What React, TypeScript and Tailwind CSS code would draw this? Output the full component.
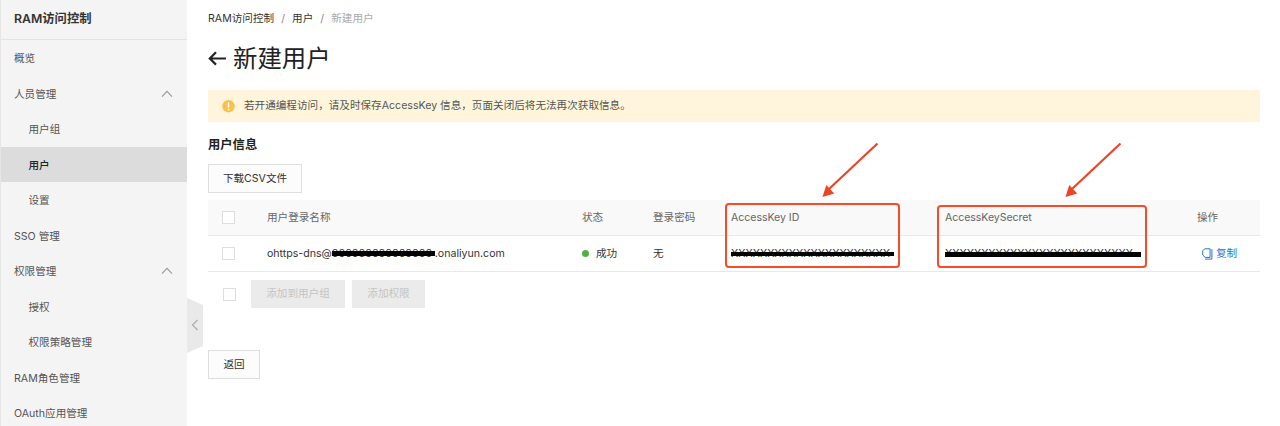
import React from 'react';

type NavItem = { label: string; sub?: boolean; open?: boolean; active?: boolean };

const nav: NavItem[] = [
  { label: '概览' },
  { label: '人员管理', open: true },
  { label: '用户组', sub: true },
  { label: '用户', sub: true, active: true },
  { label: '设置', sub: true },
  { label: 'SSO 管理' },
  { label: '权限管理', open: true },
  { label: '授权', sub: true },
  { label: '权限策略管理', sub: true },
  { label: 'RAM角色管理' },
  { label: 'OAuth应用管理' },
];

function Chevron() {
  return (
    <svg className="-mt-[2px] h-[8px] w-[12px]" viewBox="0 0 12 8" fill="none" stroke="#999" strokeWidth="1.1">
      <path d="M1 6.6 6 1.4l5 5.2" />
    </svg>
  );
}

function Sidebar() {
  return (
    <aside className="h-full w-[187px] shrink-0 overflow-hidden border-l border-[#e6e6e6] bg-[#f4f4f4]">
      <div className="flex h-[40px] items-center border-b border-[#e4e4e4] pl-[13px] pb-[1px] text-[12.3px] font-semibold text-[#333]">
        RAM访问控制
      </div>
      {nav.map((n) => (
        <div
          key={n.label}
          className={`flex h-[35.5px] items-center justify-between pt-[3px] pr-[14px] ${n.sub ? 'pl-[27.5px]' : 'pl-[13px]'} ${
            n.active ? 'bg-[#dcdcdc] font-medium text-[#222]' : 'text-[#555]'
          }`}
        >
          <span>{n.label}</span>
          {n.open && <Chevron />}
        </div>
      ))}
    </aside>
  );
}

function Checkbox() {
  return <span className="block size-[13px] shrink-0 border border-[#dedede] bg-white" />;
}

function Masked({ children, className, bar }: { children: string; className: string; bar: string }) {
  return (
    <span className={`relative block h-[16px] leading-[16px] whitespace-nowrap ${className}`}>
      {children}
      <span className={`absolute right-0 left-0 bg-black ${bar}`} />
    </span>
  );
}

function Arrow({ className }: { className: string }) {
  return (
    <svg className={`absolute h-[56px] w-[58px] ${className}`} viewBox="0 0 58 56">
      <path d="M56.5 1.5 8 47" stroke="#ee4426" strokeWidth="2.2" fill="none" />
      <path d="M1.5 55 5.3 43 13.2 51.4z" fill="#ee4426" />
    </svg>
  );
}

const cols = 'grid grid-cols-[59px_315px_71px_78px_214px_252px_63px] items-center';

export default function App() {
  return (
    <div className="relative flex h-[426px] w-[1280px] overflow-hidden bg-white font-['Inter','Noto_Sans_CJK_SC',sans-serif] text-[10.6px] leading-[16px] text-[#333]">
      <Sidebar />
      <div className="flex w-[21px] shrink-0 items-start pt-[298px]">
        <svg className="h-[56px] w-[16px]" viewBox="0 0 16 56">
          <path d="M0 0 16 7v41L0 55z" fill="#e9e9e9" />
          <path d="M10.5 22 5.5 27l5 5" fill="none" stroke="#aaa" strokeWidth="1.1" />
        </svg>
      </div>
      <main className="w-[1052px] shrink-0">
        <nav className="flex h-[36px] items-center pt-[2px]">
          <span>RAM访问控制</span>
          <span className="w-[18px] text-center text-[#888]">/</span>
          <span>用户</span>
          <span className="w-[18px] text-center text-[#888]">/</span>
          <span className="text-[#aaa]">新建用户</span>
        </nav>
        <h1 className="flex h-[44px] items-center text-[24.4px] leading-[36px] text-[#222]">
          <svg className="mr-[7px] h-[18px] w-[18px]" viewBox="0 0 18 18" fill="none" stroke="#222" strokeWidth="2.2">
            <path d="M18 9.5H2M8 3.2 1.8 9.5l6.2 6.1" />
          </svg>
          新建用户
        </h1>
        <div className="mt-[10px] flex h-[32px] items-center bg-[#fff5dc] pl-[14px] text-[#555]">
          <svg className="mr-[9px] h-[13px] w-[13px]" viewBox="0 0 13 13">
            <circle cx="6.5" cy="6.2" r="6.2" fill="#f8c14e" />
            <path d="M6.5 2.6v4.8M6.5 8.8v1.5" stroke="#fff" strokeWidth="1.5" />
          </svg>
          若开通编程访问，请及时保存AccessKey 信息，页面关闭后将无法再次获取信息。
        </div>
        <h2 className="mt-[14px] text-[12.3px] leading-[18px] font-semibold text-[#222]">用户信息</h2>
        <button className="mt-[10px] flex h-[29px] w-[94px] items-center justify-center border border-[#dedede] bg-[#fcfcfc]">
          下载CSV文件
        </button>
        <div className="relative mt-[7px]">
          <div className={`h-[36px] border-b border-[#e8e8e8] bg-[#f9f9f9] text-[#666] ${cols}`}>
            <div className="pl-[14px]"><Checkbox /></div>
            <div>用户登录名称</div>
            <div>状态</div>
            <div>登录密码</div>
            <div className="tracking-[-0.05px]">AccessKey ID</div>
            <div className="tracking-[-0.08px]">AccessKeySecret</div>
            <div>操作</div>
          </div>
          <div className={`h-[36px] border-b border-[#e8e8e8] ${cols}`}>
            <div className="pl-[14px]"><Checkbox /></div>
            <div className="flex">
              <span>ohttps-dns@</span>
              <Masked className="w-[103px]" bar="top-[5px] h-[5px]">000000000000000</Masked>
              <span>.onaliyun.com</span>
            </div>
            <div className="flex items-center">
              <span className="mr-[7px] size-[7px] rounded-full bg-[#52b043]" />
              成功
            </div>
            <div>无</div>
            <div><Masked className="w-[163px]" bar="top-[6px] h-[4px]">XXXXXXXXXXXXXXXXXXXXXX</Masked></div>
            <div><Masked className="w-[196px]" bar="top-[6px] h-[5px]">XXXXXXXXXXXXXXXXXXXXXXXXXX</Masked></div>
            <div className="flex items-center pl-[5px] text-[#2a76cf]">
              <svg className="mr-[3px] h-[12px] w-[11px]" viewBox="0 0 11 12" fill="none" stroke="#2a76cf" strokeWidth="1">
                <path d="M2.7.8h5.4v8.6H3.2L.7 7V2.8z" />
                <path d="M9.9 1.2v9.9H3" />
              </svg>
              复制
            </div>
          </div>
          <div className="absolute top-[3px] left-[517px] h-[65px] w-[175px] rounded-[4px] border-2 border-[#f84c28]" />
          <div className="absolute top-[5px] left-[729px] h-[63px] w-[210px] rounded-[4px] border-2 border-[#f84c28]" />
          <Arrow className="-top-[58px] left-[613px]" />
          <Arrow className="-top-[58px] left-[856px]" />
        </div>
        <div className="mt-[8px] flex items-center pl-[15px] text-[#c4c4c4]">
          <Checkbox />
          <button className="ml-[15px] h-[28px] w-[94px] bg-[#ebebeb]">添加到用户组</button>
          <button className="ml-[7px] h-[28px] w-[73px] bg-[#ebebeb]">添加权限</button>
        </div>
        <button className="mt-[42px] flex h-[29px] w-[52px] items-center justify-center border border-[#dedede] bg-[#fcfcfc]">
          返回
        </button>
      </main>
    </div>
  );
}
